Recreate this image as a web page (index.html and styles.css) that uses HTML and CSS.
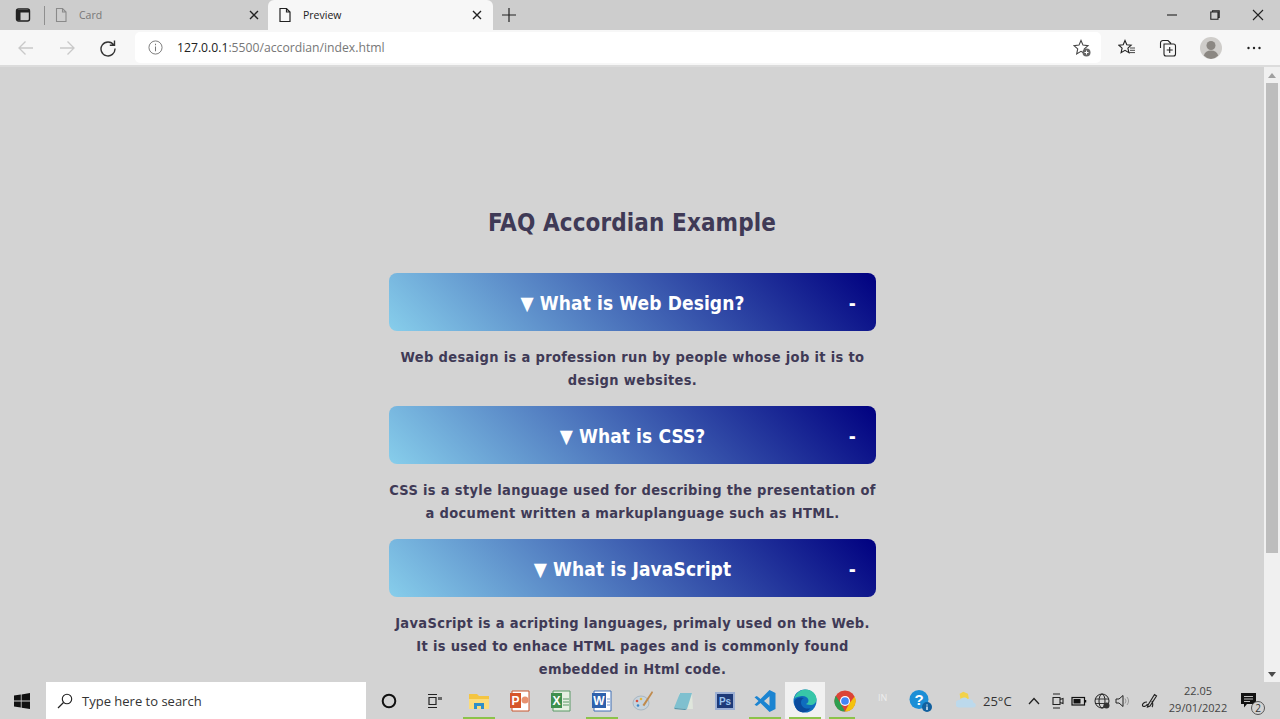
FILE: index.html
```html
<!DOCTYPE html>
<html lang="en">
<head>
<meta charset="utf-8">
<title>Preview</title>
<link rel="stylesheet" href="styles.css">
</head>
<body>
<div class="tabbar">
  <div class="tab-actions">
    <svg class="ic16" viewBox="0 0 16 16"><rect x="1.5" y="2" width="13" height="12" rx="2" fill="none" stroke="#222" stroke-width="1.4"/><path d="M2 3h12v2.500H2zM2 5h3.500v8.500H2z" fill="#222"/></svg>
    <span class="tab-sep"></span>
  </div>
  <div class="tab">
    <svg class="ic16" viewBox="0 0 16 16"><path d="M3.500 1.500h6l3.500 3.500v9.500h-9.500zM9.500 1.500v3.500h3.500" fill="none" stroke="#8a8a8a" stroke-width="1.100"/></svg>
    <span class="tab-title">Card</span>
    <svg class="tab-x" viewBox="0 0 10 10"><path d="M1 1l8 8M9 1l-8 8" stroke="#222" stroke-width="1.400"/></svg>
  </div>
  <div class="tab active">
    <svg class="ic16" viewBox="0 0 16 16"><path d="M3 1.500h6.500l3.500 3.500v9.500H3zM9.500 1.500v3.500h3.500" fill="none" stroke="#222" stroke-width="1.200"/></svg>
    <span class="tab-title">Preview</span>
    <svg class="tab-x" viewBox="0 0 10 10"><path d="M1 1l8 8M9 1l-8 8" stroke="#222" stroke-width="1.400"/></svg>
  </div>
  <svg class="new-tab" viewBox="0 0 14 14"><path d="M7 0v14M0 7h14" stroke="#222" stroke-width="1.200"/></svg>
  <div class="win-controls">
    <svg class="ic12" viewBox="0 0 12 12"><path d="M1 6h10" stroke="#222" stroke-width="1.100"/></svg>
    <svg class="ic12" viewBox="0 0 12 12"><path d="M3.500 3V1.800h6.700v6.700H9M1.800 3h7.200v7.200H1.800z" fill="none" stroke="#222" stroke-width="1.100"/></svg>
    <svg class="ic12" viewBox="0 0 12 12"><path d="M1 1l10 10M11 1L1 11" stroke="#222" stroke-width="1.100"/></svg>
  </div>
</div>
<div class="toolbar">
  <svg class="nav" viewBox="0 0 18 18"><path d="M16 9H2M8.500 2.500L2 9l6.500 6.500" fill="none" stroke="#c9c9c9" stroke-width="1.300"/></svg>
  <svg class="nav" viewBox="0 0 18 18"><path d="M2 9h14M9.500 2.500L16 9l-6.500 6.500" fill="none" stroke="#c9c9c9" stroke-width="1.300"/></svg>
  <svg class="nav" viewBox="0 0 18 18"><path d="M14.800 6A7 7 0 1 0 16 9.500M15.500 1.500V6.200h-4.700" fill="none" stroke="#333" stroke-width="1.400"/></svg>
  <div class="urlbar">
    <svg class="info" viewBox="0 0 16 16"><circle cx="8" cy="8" r="7" fill="none" stroke="#777" stroke-width="1"/><path d="M8 7v5M8 4v1.500" stroke="#777" stroke-width="1.100"/></svg>
    <span class="url"><b>127.0.0.1</b>:5500/accordian/index.html</span>
    <svg class="fav-add" viewBox="0 0 18 18"><path d="M8 1.500l2 4.600 5 .5-3.700 3.300L12.300 15 8 12.400 3.700 15l1-5.100L1 6.600l5-.5z" fill="none" stroke="#444" stroke-width="1.100"/><circle cx="13.500" cy="13.500" r="4" fill="#666"/><path d="M13.500 11.500v4M11.500 13.500h4" stroke="#fff"/></svg>
  </div>
  <div class="tools">
    <svg class="ic18" viewBox="0 0 18 18"><path d="M7 1.500l1.800 4.200 4.400.5-3.300 3 1 4.500L7 11.300l-3.900 2.400 1-4.500-3.300-3 4.400-.5z" fill="none" stroke="#222" stroke-width="1.100"/><path d="M12 9h5M12 11.300h5M10.500 13.600H17" stroke="#333" stroke-width=".9"/></svg>
    <svg class="ic18" viewBox="0 0 18 18"><path d="M1.500 9V4a2.500 2.500 0 0 1 2.500-2.500h5l3 3M5 5h9.500A2 2 0 0 1 16.500 7v8a2 2 0 0 1-2 2H7a2 2 0 0 1-2-2zM10.700 8v6M7.700 11h6" fill="none" stroke="#222" stroke-width="1.100"/></svg>
    <svg class="avatar" viewBox="0 0 22 22"><circle cx="11" cy="11" r="11" fill="#cfcdca"/><circle cx="11" cy="8.500" r="4.500" fill="#8b8782"/><path d="M3.800 18.500c1-3.500 3.500-5 7.200-5s6.200 1.500 7.200 5A11 11 0 0 1 11 22a11 11 0 0 1-7.200-3.500z" fill="#8b8782"/></svg>
    <svg class="ic18" viewBox="0 0 18 18"><circle cx="3.500" cy="9" r="1.200" fill="#222"/><circle cx="9" cy="9" r="1.200" fill="#222"/><circle cx="14.500" cy="9" r="1.200" fill="#222"/></svg>
  </div>
</div>
<div class="viewport">
  <main class="page">
    <h1 class="title">FAQ Accordian Example</h1>
    <section class="faq">
      <div class="q"><span class="q-text">▼ What is Web Design?</span><span class="q-sign">-</span></div>
      <p class="a">Web desaign is a profession run by people whose job it is to design websites.</p>
    </section>
    <section class="faq">
      <div class="q"><span class="q-text">▼ What is CSS?</span><span class="q-sign">-</span></div>
      <p class="a">CSS is a style language used for describing the presentation of a document written a markuplanguage such as HTML.</p>
    </section>
    <section class="faq">
      <div class="q"><span class="q-text">▼ What is JavaScript</span><span class="q-sign">-</span></div>
      <p class="a">JavaScript is a acripting languages, primaly used on the Web. It is used to enhace HTML pages and is commonly found embedded in Html code.</p>
    </section>
  </main>
  <div class="scrollbar">
    <span class="arrow up"></span>
    <div class="track"><div class="thumb"></div></div>
    <span class="arrow down"></span>
  </div>
</div>
<footer class="taskbar">
  <div class="start"><svg class="ic16" viewBox="0 0 16 16"><path d="M0 2.500l6.800-1v6H0zM7.600 1.400L16 0v7.500H7.600zM0 8.400h6.800v6.100L0 13.500zM7.600 8.400H16V16l-8.400-1.300z" fill="#111"/></svg></div>
  <div class="search">
    <svg class="ic16" viewBox="0 0 16 16"><circle cx="10" cy="6" r="4.700" fill="none" stroke="#222" stroke-width="1.100"/><path d="M6.500 9.500L1 15" stroke="#222" stroke-width="1.200"/></svg>
    <span>Type here to search</span>
  </div>
  <div class="cell wide"><svg class="ic16" viewBox="0 0 16 16"><circle cx="8" cy="8" r="6.300" fill="none" stroke="#111" stroke-width="2"/></svg></div>
  <div class="cell wide"><svg class="ic16" viewBox="0 0 16 16"><path d="M2 1.500h9M2 14.500h9M3 4.500h7v7H3zM13 4v3M15 4v3" fill="none" stroke="#222" stroke-width="1.200"/></svg></div>
  <div class="apps">
    <div class="cell run"><svg class="app" viewBox="0 0 22 22"><path d="M1 4h8l2 2h10v13H1z" fill="#f4c542"/><path d="M1 9h20v10H1z" fill="#fbdc7c"/><path d="M6 19v-6h10v6h-3v-3H9v3z" fill="#2f8fc9"/></svg></div>
    <div class="cell"><svg class="app" viewBox="0 0 22 22"><path d="M3 1h17v20H3z" fill="#fff" stroke="#c9572e"/><path d="M1 3h11v15H1z" fill="#d6552a"/><text x="6.500" y="15" class="app-letter" text-anchor="middle">P</text><circle cx="16" cy="10" r="3.500" fill="#e8916f"/></svg></div>
    <div class="cell"><svg class="app" viewBox="0 0 22 22"><path d="M3 1h17v20H3z" fill="#e6efe2" stroke="#5a9a66"/><path d="M1 3h11v15H1z" fill="#3f8f4f"/><text x="6.500" y="15" class="app-letter" text-anchor="middle">X</text><path d="M13 9h6M13 12h6M13 15h6" stroke="#5a9a66"/></svg></div>
    <div class="cell run"><svg class="app" viewBox="0 0 22 22"><path d="M3 1h17v20H3z" fill="#fff" stroke="#3f6fb5"/><path d="M1 3h14v15H1z" fill="#2f62ad"/><text x="8" y="15" class="app-letter" text-anchor="middle">W</text><path d="M16 9h3M16 12h3M16 15h3" stroke="#7a9bcf"/></svg></div>
    <div class="cell"><svg class="app" viewBox="0 0 22 22"><ellipse cx="9" cy="13" rx="8" ry="7" fill="#c6d3dd" stroke="#8ea3b2" stroke-width=".6"/><circle cx="5" cy="11" r="1.300" fill="#d9503f"/><circle cx="9" cy="9" r="1.300" fill="#e4b63d"/><circle cx="6" cy="15.500" r="1.300" fill="#3d88c8"/><path d="M20 1L10.500 15l1.800 1.300L21 2.500z" fill="#c08a4c"/></svg></div>
    <div class="cell"><svg class="app" viewBox="0 0 22 22"><path d="M6 3l13 0 1 16-15 0z" fill="#dfe6dc"/><path d="M7 3L1 18l13 1 5-16z" fill="#7fc0cf"/><path d="M2 18l12 1-2 1-11-1z" fill="#4f93a8"/></svg></div>
    <div class="cell"><svg class="app" viewBox="0 0 22 22"><rect x="1" y="2" width="20" height="18" fill="#9db0d4"/><rect x="3" y="4" width="16" height="14" fill="#1e3a78"/><text x="11" y="15" class="app-ps" text-anchor="middle">Ps</text></svg></div>
    <div class="cell run tight"><svg class="app" viewBox="0 0 22 22"><path d="M15.500 0L21.500 3V19L15.500 22 6.500 13 2.800 16 .5 14.800 4.500 11 .5 7.200 2.800 6 6.500 9zM15.500 6.200L10 11l5.500 4.800z" fill="#1b84d1"/></svg></div>
    <div class="cell run active"><svg class="app big" viewBox="0 0 24 24"><circle cx="12" cy="12" r="11.500" fill="#0f6cbd"/><path d="M1 10C3 3.500 8 .5 12.500 .5c6.500 0 11 4.500 11 10 0 3.500-3 5.500-6 5.500-2.500 0-4.500-1-4.500-1 2-1 2.800-2.500 2.300-4.500C14.500 8 11.500 6.500 8.500 7c-3 .5-6 1-7.500 3z" fill="#37c6a8"/><path d="M8 13.500c0 4.500 4.500 7 9.500 5.800-2.500 3.500-7.500 5-11.500 3C3 20.500 1 16.500 1.500 12 3 9 7 7.500 11 9c-2 .5-3 2.500-3 4.500z" fill="#0a4a9c"/></svg></div>
    <div class="cell run short"><svg class="app" viewBox="0 0 24 24"><circle cx="12" cy="12" r="11.500" fill="#db4437"/><path d="M2 6.200L7.500 15 12 23.500A11.500 11.500 0 0 1 2 6.200z" fill="#2e9e4f"/><path d="M22.500 7A11.500 11.500 0 0 1 12 23.500L16.500 15z" fill="#f4c20d"/><circle cx="12" cy="12" r="5.500" fill="#fff"/><circle cx="12" cy="12" r="4.200" fill="#4285f4"/></svg></div>
  </div>
  <div class="tray">
    <span class="lang">IN</span>
    <svg class="help" viewBox="0 0 24 24"><circle cx="10" cy="10.500" r="9.500" fill="#1c8fd6"/><text x="10" y="16" class="help-q" text-anchor="middle">?</text><circle cx="18" cy="18" r="5" fill="#11609f"/><path d="M18 15.500v1M18 17.500v3.500" stroke="#fff" stroke-width="1.300"/></svg>
    <svg class="weather" viewBox="0 0 24 24"><path d="M4 4l4-2 5 2 1 5-4 4-5-2z" fill="#f2d24a"/><path d="M3 19a4 4 0 0 1 1-8c1-3 7-4 9-1 3-1 6 1 6 4 3 0 4 5 0 5z" fill="#bcd9ec"/></svg>
    <span class="temp">25°C</span>
    <svg class="chev" viewBox="0 0 12 8"><path d="M1 7l5-5.500L11 7" fill="none" stroke="#222" stroke-width="1.300"/></svg>
    <svg class="ic16 t-meet" viewBox="0 0 16 16"><path d="M4 1h7M4 15h7M4 4.500h7v7H4zM11 6.500l3-1v5l-3-1" fill="none" stroke="#222" stroke-width="1.100"/></svg>
    <svg class="ic16 t-bat" viewBox="0 0 16 16"><rect x="1" y="4.500" width="12.500" height="7.500" fill="none" stroke="#111" stroke-width="1.200"/><rect x="2.500" y="6" width="7" height="4.500" fill="#111"/><path d="M14.500 7v2.500" stroke="#111" stroke-width="1.500"/></svg>
    <svg class="ic16 t-globe" viewBox="0 0 16 16"><circle cx="8" cy="8" r="7" fill="none" stroke="#222"/><ellipse cx="8" cy="8" rx="3" ry="7" fill="none" stroke="#222"/><path d="M1 6h14M1 10.500h14" stroke="#222" stroke-width=".9"/><circle cx="12.500" cy="12.500" r="3" fill="#333"/></svg>
    <svg class="ic16 t-spk" viewBox="0 0 16 16"><path d="M1 6h3l4-3.500v11L4 10H1z" fill="none" stroke="#222"/><path d="M10 5.500a4 4 0 0 1 0 5M12 4a6.500 6.500 0 0 1 0 8" fill="none" stroke="#999"/></svg>
    <svg class="ic18 t-pen" viewBox="0 0 18 18"><path d="M7 13L13.500 2.500l2 1.500L9 14l-2.500 1zM6 10c-3 0-5 2-4.500 3.500S5 15 6.500 12M11 9c1 3 1 5 0 6" fill="none" stroke="#222" stroke-width="1.200"/></svg>
    <div class="clock"><span>22.05</span><span>29/01/2022</span></div>
    <div class="notif">
      <svg class="ic18" viewBox="0 0 18 18"><path d="M1 1h15v11H7l-3 3.500V12H1z" fill="#111"/><path d="M4 4.500h9M4 7h9M4 9.500h6" stroke="#d3d3d3" stroke-width=".9"/></svg>
      <span class="badge">2</span>
    </div>
  </div>
</footer>
</body>
</html>
```
FILE: styles.css
```css
* { box-sizing: border-box; }
html, body { margin: 0; height: 100%; overflow: hidden; }
body {
  display: flex;
  flex-direction: column;
  height: 719px;
  font-family: "Open Sans", "Noto Sans", sans-serif;
  background: #d3d3d3;
}
svg { display: block; flex: none; }
.ic16 { width: 16px; height: 16px; }
.ic12 { width: 12px; height: 12px; }
.ic18 { width: 18px; height: 18px; }

.tabbar {
  height: 30px;
  display: flex;
  align-items: flex-end;
  background: #cdcdcd;
  flex: none;
}
.tab-actions {
  width: 46px;
  height: 30px;
  display: flex;
  align-items: center;
  padding-left: 15px;
  gap: 13px;
  flex: none;
}
.tab-sep { width: 1px; height: 19px; background: #8f8f8f; flex: none; }
.tab {
  width: 222px;
  height: 30px;
  display: flex;
  align-items: center;
  padding: 0 9px 0 7px;
  gap: 10px;
  flex: none;
  font-size: 10.500px;
  color: #777;
}
.tab .tab-title { flex: 1; }
.tab.active {
  width: 225px;
  background: #f7f7f7;
  border-radius: 6px 6px 0 0;
  color: #222;
  padding: 0 11px 0 9px;
}
.tab-x { width: 10px; height: 10px; }
.new-tab { width: 14px; height: 14px; margin: 0 0 8px 9px; }
.win-controls {
  margin-left: auto;
  height: 30px;
  display: flex;
  align-items: center;
  gap: 31px;
  padding-right: 16px;
}

.toolbar {
  height: 37px;
  display: flex;
  align-items: center;
  background: #f7f7f7;
  border-bottom: 2px solid #dcdcdc;
  padding-left: 17px;
  flex: none;
}
.nav { width: 18px; height: 18px; margin-right: 23px; }
.urlbar {
  width: 966px;
  height: 31px;
  margin: 0 0 0 -5px;
  display: flex;
  align-items: center;
  background: #fff;
  border-radius: 5px;
  padding: 0 10px 0 13px;
  font-size: 12.200px;
  color: #777;
}
.info { width: 15px; height: 15px; margin-right: 14px; }
.url b { font-weight: 400; color: #222; }
.fav-add { width: 18px; height: 18px; margin-left: auto; }
.tools {
  display: flex;
  align-items: center;
  gap: 23px;
  margin-left: 17px;
}
.avatar { width: 22px; height: 22px; }

.viewport {
  flex: 1;
  min-height: 0;
  display: flex;
}
.page {
  flex: 1;
  min-width: 0;
  overflow: hidden;
  display: flex;
  flex-direction: column;
  align-items: center;
  background: #d3d3d3;
  color: #3f3a56;
  font-family: "DejaVu Sans", sans-serif;
  font-stretch: condensed;
}
.title {
  margin: 141px 0 35px;
  font-size: 24px;
  line-height: 30px;
  font-weight: 700;
  letter-spacing: 0.100px;
  text-align: center;
}
.faq { width: 487px; margin-left: 1px; flex: none; }
.q {
  height: 58px;
  display: flex;
  align-items: center;
  position: relative;
  justify-content: center;
  border-radius: 8px;
  background: linear-gradient(45deg, #87ceeb, #000080);
  color: #fff;
  font-size: 19px;
  font-weight: 700;
  letter-spacing: 0.100px;
  padding-top: 2px;
}
.q-sign { position: absolute; right: 20px; }
.a {
  margin: 15px 0 14px;
  font-size: 14.500px;
  line-height: 23px;
  font-weight: 700;
  letter-spacing: 0.340px;
  text-align: center;
}

.scrollbar {
  width: 16px;
  flex: none;
  display: flex;
  flex-direction: column;
  background: #f0f0f0;
}
.arrow { height: 16px; flex: none; display: flex; align-items: center; justify-content: center; }
.arrow::before {
  content: "";
  border-left: 4px solid transparent;
  border-right: 4px solid transparent;
}
.arrow.up::before { border-bottom: 5px solid #a0a0a0; }
.arrow.down::before { border-top: 5px solid #4a4a4a; }
.track { flex: 1; padding: 0 2px; }
.thumb { height: 470px; background: #bdbdbd; }

.taskbar {
  height: 37px;
  display: flex;
  align-items: center;
  flex: none;
  background: #d3d3d3;
}
.start { width: 46px; display: flex; justify-content: center; padding-right: 2px; }
.search {
  width: 320px;
  height: 37px;
  display: flex;
  align-items: center;
  gap: 9px;
  padding-left: 11px;
  background: #fff;
  font-size: 13px;
  color: #333;
}
.cell {
  width: 40px;
  height: 37px;
  display: flex;
  align-items: center;
  justify-content: center;
  position: relative;
  flex: none;
}
.cell.wide { width: 45px; }
.apps { display: flex; gap: 1px; margin-left: 3px; }
.app { width: 22px; height: 22px; }
.app.big { width: 24px; height: 24px; }
.app-letter { font: 700 12px "Liberation Sans", sans-serif; fill: #fff; }
.app-ps { font: 700 10px "Liberation Sans", sans-serif; fill: #9cc4ee; }
.help-q { font: 700 15px "Liberation Sans", sans-serif; fill: #fff; }
.cell.run::after {
  content: "";
  position: absolute;
  left: 4px;
  right: 4px;
  bottom: 0;
  height: 2px;
  background: #8bc34a;
}
.cell.tight { margin: 0 -1px 0 -1px; }
.cell.active { background: #f1f1f1; margin-right: -1px; }
.cell.short::after { right: 10px; }

.tray {
  margin-left: auto;
  display: flex;
  align-items: center;
  height: 37px;
  position: relative;
  width: 413px;
  color: #333;
}
.lang { font-size: 9px; color: #ededed; margin: 0 0 6px 11px; width: 22px; }
.help { width: 24px; height: 24px; margin-left: 9px; }
.weather { width: 22px; height: 22px; margin-left: 23px; }
.temp { font-size: 13px; margin-left: 5px; width: 34px; }
.chev { width: 12px; height: 8px; margin-left: 11px; }
.t-meet { margin-left: 9px; }
.t-bat { margin-left: 6px; }
.t-globe { margin-left: 7px; }
.t-spk { margin-left: 5px; }
.t-pen { margin-left: 10px; }
.clock {
  display: flex;
  flex-direction: column;
  align-items: center;
  width: 60px;
  margin: 0 1px 3px 9px;
  font-size: 11px;
  line-height: 17px;
  color: #444;
}
.notif { position: relative; margin-left: 11px; }
.badge {
  position: absolute;
  right: -7px;
  bottom: -5px;
  width: 14px;
  height: 14px;
  border: 1px solid #555;
  border-radius: 50%;
  background: #d3d3d3;
  font-size: 10px;
  line-height: 12px;
  text-align: center;
}
```
